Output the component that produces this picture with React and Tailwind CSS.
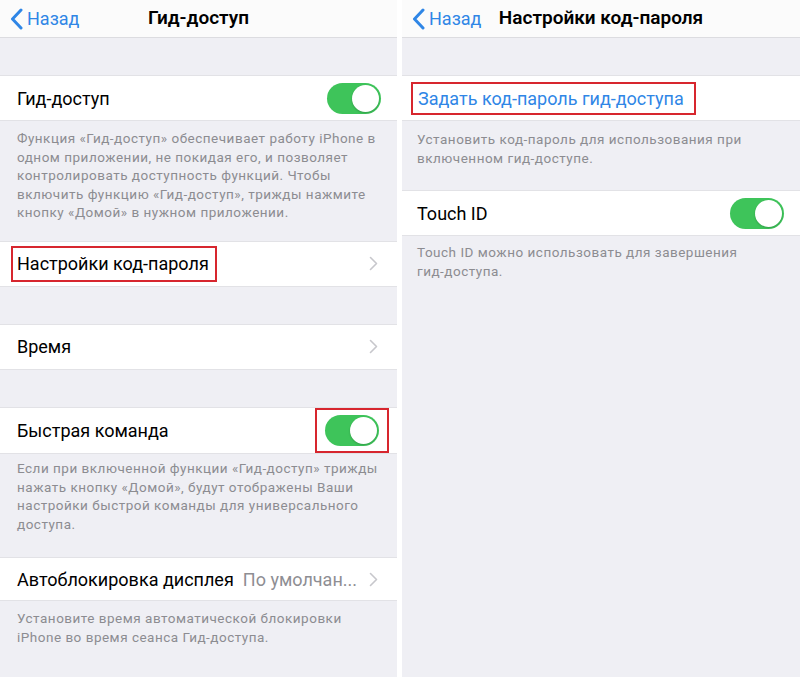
import React from 'react';

const font = { fontFamily: '"Roboto", "Noto Sans", "Liberation Sans", sans-serif' };

const Chevron = ({ className = '' }) => (
    <svg width="9" height="15" viewBox="0 0 9 15" className={className}>
        <path d="M1.5 1.5 L7.5 7.5 L1.5 13.5" fill="none" stroke="currentColor" strokeWidth="1.6" strokeLinecap="round" strokeLinejoin="round" />
    </svg>
);

const BackChevron = () => (
    <svg width="13" height="22" viewBox="0 0 13 22" className="text-[#2f86e6]">
        <path d="M11 2 L2.5 11 L11 20" fill="none" stroke="currentColor" strokeWidth="3" strokeLinecap="round" strokeLinejoin="round" />
    </svg>
);

const Toggle = () => (
    <div className="w-[54px] h-[31px] rounded-full bg-[#3ec45a] p-[2px] flex justify-end">
        <div className="w-[27px] h-[27px] rounded-full bg-white shadow-[0_1px_2px_rgba(0,0,0,0.2)]" />
    </div>
);

const NavBar = ({ title }) => (
    <div className="h-[38px] shrink-0 bg-[#fbfbfb] border-b border-[#dcdce0] grid grid-cols-[1fr_auto_1fr] items-center">
        <div className="flex items-center gap-[4px] pl-[10px] text-[#2f86e6] text-[18px]">
            <BackChevron />
            <span>Назад</span>
        </div>
        <div className="text-[19px] font-semibold text-black">{title}</div>
        <div />
    </div>
);

const Row = ({ children, h = 'h-[46px]', pl = 'pl-[17px]' }) => (
    <div className={`${h} ${pl} shrink-0 bg-white border-y border-[#e2e2e6] flex items-center justify-between pr-[16px] text-[18px] text-black`}>
        {children}
    </div>
);

const Footer = ({ children, className }) => (
    <div className={`text-[13.5px] leading-[18.6px] tracking-[0.5px] text-[#8c8c91] ${className}`}>{children}</div>
);

const LeftPanel = () => (
    <div className="w-[397px] h-full bg-[#efeff4] flex flex-col overflow-hidden">
        <NavBar title="Гид-доступ" />
        <div className="h-[37px] shrink-0" />
        <Row>
            <span>Гид-доступ</span>
            <Toggle />
        </Row>
        <Footer className="px-[17px] pt-[8px] pb-[19px]">
            Функция «Гид-доступ» обеспечивает работу iPhone в одном приложении, не покидая его, и позволяет контролировать доступность функций. Чтобы включить функцию «Гид-доступ», трижды нажмите кнопку «Домой» в нужном приложении.
        </Footer>
        <Row>
            <span className="-ml-[6px] pl-[4px] pr-[6px] h-[36px] flex items-center border-2 border-[#d7262e]">Настройки код-пароля</span>
            <Chevron className="text-[#c7c7cc] mr-[3px]" />
        </Row>
        <div className="h-[37px] shrink-0" />
        <Row>
            <span>Время</span>
            <Chevron className="text-[#c7c7cc] mr-[3px]" />
        </Row>
        <div className="h-[37px] shrink-0" />
        <Row h="h-[47px]">
            <span>Быстрая команда</span>
            <div className="-mr-[8px] self-stretch flex items-center px-[8px] border-2 border-[#d7262e]">
                <Toggle />
            </div>
        </Row>
        <Footer className="px-[17px] pt-[5px] pb-[24px]">
            Если при включенной функции «Гид-доступ» трижды нажать кнопку «Домой», будут отображены Ваши настройки быстрой команды для универсального доступа.
        </Footer>
        <Row h="h-[44px]">
            <span>Автоблокировка дисплея</span>
            <div className="flex items-center gap-[12px]">
                <span className="text-[#8e8e93]">По умолчан...</span>
                <Chevron className="text-[#c7c7cc] mr-[3px]" />
            </div>
        </Row>
        <Footer className="px-[17px] pt-[8px]">
            Установите время автоматической блокировки iPhone во время сеанса Гид-доступа.
        </Footer>
    </div>
);

const RightPanel = () => (
    <div className="flex-1 h-full bg-[#efeff4] flex flex-col overflow-hidden">
        <NavBar title="Настройки код-пароля" />
        <div className="h-[37px] shrink-0" />
        <Row pl="pl-[15px]">
            <span className="-ml-[6px] pl-[5px] pr-[10px] h-[33px] flex items-center border-2 border-[#d7262e] text-[#2f86e6] text-[18px]">Задать код-пароль гид-доступа</span>
        </Row>
        <Footer className="pl-[15px] pr-[45px] pt-[9px] pb-[23px]">
            Установить код-пароль для использования при включенном гид-доступе.
        </Footer>
        <Row pl="pl-[15px]">
            <span>Touch ID</span>
            <Toggle />
        </Row>
        <Footer className="pl-[15px] pr-[45px] pt-[7px]">
            Touch ID можно использовать для завершения гид-доступа.
        </Footer>
    </div>
);

export default function App() {
    return (
        <div style={font} className="w-[800px] h-[677px] bg-white flex gap-[5px] overflow-hidden">
            <LeftPanel />
            <RightPanel />
        </div>
    );
}
